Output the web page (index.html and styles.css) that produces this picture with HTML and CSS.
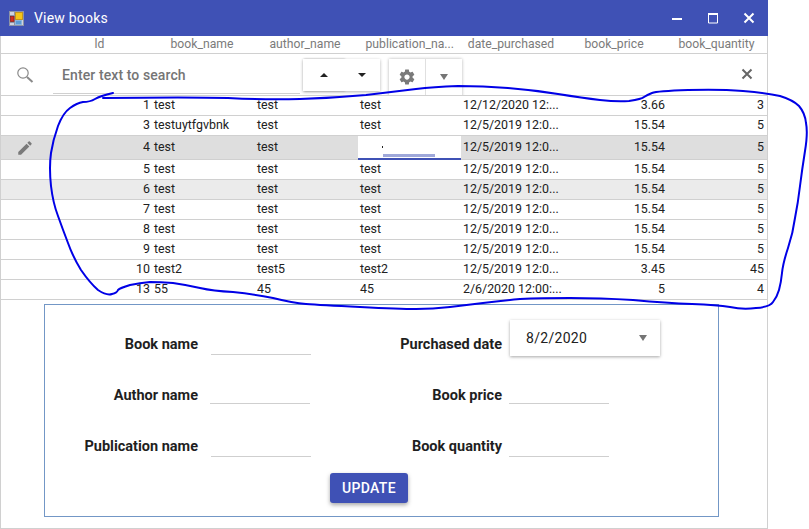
FILE: index.html
```html
<!DOCTYPE html>
<html lang="en">
<head>
<meta charset="utf-8">
<title>View books</title>
<link rel="stylesheet" href="styles.css">
</head>
<body>
<div class="window">
  <header class="titlebar">
    <svg class="app-icon" width="15" height="15" viewBox="0 0 15 15"><rect x="0.5" y="0.5" width="14" height="14" fill="#cfd3de" stroke="#8d93a6"/><path d="M0.500 4.500h5M5.500 0.500v14M0.500 11.500h5" stroke="#8d93a6" fill="none"/><rect x="6.500" y="1.500" width="7" height="7" fill="#f5c518" stroke="#c4961c"/><rect x="1.500" y="5.500" width="3.500" height="5" fill="#d42b1e" stroke="#8b1f17" stroke-width="0.800"/><rect x="6.500" y="9.500" width="6" height="4" fill="#5b9bd5" stroke="#8ab4de" stroke-width="0.800"/></svg>
    <span class="title">View books</span>
    <div class="win-controls">
      <svg width="12" height="12" viewBox="0 0 12 12"><rect x="1" y="6" width="10" height="2" fill="#fff"/></svg>
      <svg width="12" height="12" viewBox="0 0 12 12"><path d="M1.500 2v9h9V2z" fill="none" stroke="#fff"/><rect x="1" y="1" width="10" height="2" fill="#fff"/></svg>
      <svg width="12" height="12" viewBox="0 0 12 12"><path d="M1.500 1.500l9 9M10.500 1.500l-9 9" stroke="#fff" stroke-width="2" fill="none"/></svg>
    </div>
  </header>

  <div class="row head">
    <span></span>
    <span>ld</span><span>book_name</span><span>author_name</span><span class="clip">publication_na...</span><span>date_purchased</span><span>book_price</span><span class="last">book_quantity</span>
  </div>

  <div class="toolbar">
    <svg class="search-icon" width="18" height="18" viewBox="0 0 18 18"><circle cx="7" cy="7" r="5.200" fill="none" stroke="#8a8a8a" stroke-width="1.200"/><path d="M11 11l5.500 5" stroke="#8a8a8a" stroke-width="2" fill="none"/></svg>
    <div class="search">Enter text to search</div>
    <div class="btn-group sort">
      <button class="tool"><i class="caret up"></i></button>
      <button class="tool"><i class="caret down"></i></button>
    </div>
    <div class="btn-group gear">
      <button class="tool">
        <svg width="18" height="18" viewBox="0 0 24 24"><path fill="#7a7a7a" d="M19.430 12.980c.04-.32.07-.64.07-.98s-.03-.66-.07-.98l2.110-1.650c.19-.15.24-.42.12-.64l-2-3.460c-.12-.22-.39-.3-.61-.22l-2.490 1c-.52-.4-1.080-.73-1.690-.98l-.38-2.650C14.460 2.180 14.250 2 14 2h-4c-.25 0-.46.18-.49.420l-.38 2.650c-.61.25-1.170.59-1.690.98l-2.490-1c-.23-.09-.49 0-.61.22l-2 3.460c-.13.22-.07.49.12.64l2.110 1.650c-.04.32-.07.650-.07.980s.03.66.07.98l-2.110 1.650c-.19.15-.24.42-.12.64l2 3.460c.12.22.39.3.61.22l2.490-1c.52.4 1.080.73 1.690.98l.38 2.650c.03.24.24.42.49.42h4c.25 0 .46-.18.49-.42l.38-2.650c.61-.25 1.170-.59 1.690-.98l2.490 1c.23.09.49 0 .61-.22l2-3.460c.12-.22.07-.49-.12-.64l-2.110-1.650zM12 15.500c-1.930 0-3.500-1.570-3.500-3.500s1.570-3.500 3.500-3.500 3.500 1.570 3.500 3.500-1.570 3.500-3.500 3.500z"/></svg>
      </button>
      <button class="tool"><i class="caret down grey"></i></button>
    </div>
    <svg class="close-icon" width="12" height="12" viewBox="0 0 12 12"><path d="M1.500 1.500l9 9M10.500 1.500l-9 9" stroke="#666" stroke-width="2" fill="none"/></svg>
  </div>

  <div class="row"><span></span><span class="num">1</span><span>test</span><span>test</span><span>test</span><span>12/12/2020 12:...</span><span class="num">3.66</span><span class="num qty">3</span></div>
  <div class="row"><span></span><span class="num">3</span><span>testuytfgvbnk</span><span>test</span><span>test</span><span>12/5/2019 12:0...</span><span class="num">15.54</span><span class="num qty">5</span></div>
  <div class="row selected">
    <span class="pencil"><svg width="18" height="18" viewBox="0 0 24 24"><path fill="#7a7a7a" d="M3 17.250V21h3.750L17.810 9.940l-3.750-3.750L3 17.250zM20.710 7.040c.39-.39.39-1.020 0-1.410l-2.340-2.340c-.39-.39-1.020-.39-1.410 0l-1.830 1.830 3.750 3.750 1.830-1.830z"/></svg></span>
    <span class="num">4</span><span>test</span><span>test</span>
    <span class="editor"><i class="cursor"></i><i class="ink"></i></span>
    <span>12/5/2019 12:0...</span><span class="num">15.54</span><span class="num qty">5</span>
  </div>
  <div class="row"><span></span><span class="num">5</span><span>test</span><span>test</span><span>test</span><span>12/5/2019 12:0...</span><span class="num">15.54</span><span class="num qty">5</span></div>
  <div class="row alt"><span></span><span class="num">6</span><span>test</span><span>test</span><span>test</span><span>12/5/2019 12:0...</span><span class="num">15.54</span><span class="num qty">5</span></div>
  <div class="row"><span></span><span class="num">7</span><span>test</span><span>test</span><span>test</span><span>12/5/2019 12:0...</span><span class="num">15.54</span><span class="num qty">5</span></div>
  <div class="row"><span></span><span class="num">8</span><span>test</span><span>test</span><span>test</span><span>12/5/2019 12:0...</span><span class="num">15.54</span><span class="num qty">5</span></div>
  <div class="row"><span></span><span class="num">9</span><span>test</span><span>test</span><span>test</span><span>12/5/2019 12:0...</span><span class="num">15.54</span><span class="num qty">5</span></div>
  <div class="row"><span></span><span class="num">10</span><span>test2</span><span>test5</span><span>test2</span><span>12/5/2019 12:0...</span><span class="num">3.45</span><span class="num qty">45</span></div>
  <div class="row"><span></span><span class="num">13</span><span>55</span><span>45</span><span>45</span><span>2/6/2020 12:00:...</span><span class="num">5</span><span class="num qty">4</span></div>

  <form class="edit-form">
    <div class="fields">
      <label class="lbl top">Book name</label><div class="line top"></div>
      <label class="lbl top">Purchased date</label>
      <div class="date"><span>8/2/2020</span><i class="caret down grey"></i></div>
      <label class="lbl">Author name</label><div class="line mid shift"></div>
      <label class="lbl">Book price</label><div class="line mid right"></div>
      <label class="lbl">Publication name</label><div class="line"></div>
      <label class="lbl">Book quantity</label><div class="line right"></div>
    </div>
    <button class="update" type="button">UPDATE</button>
  </form>
</div>

<svg class="scribble" width="809" height="529" viewBox="0 0 809 529"><path d="M103 98Q190 97 228 98Q267 100 300 99Q333 98 366 95Q400 91 416 89Q433 87 458 86Q483 86 508 88Q533 90 558 94Q583 98 600 100Q617 102 629 101Q642 99 644 97Q647 95 652 93Q657 91 688 90Q720 89 743 91Q767 93 780 96Q793 100 799 106Q805 113 806 123Q808 133 805 151Q802 170 800 186Q798 203 795 218Q793 233 788 248Q783 263 782 273Q781 283 779 290Q777 297 773 302Q770 307 756 308Q743 310 730 307Q717 305 692 304Q667 303 633 300Q600 298 570 298Q540 298 520 299Q500 301 483 303Q467 305 450 307Q433 309 416 309Q400 309 360 307Q320 305 306 304Q293 303 273 298Q253 294 233 292Q213 291 200 288Q187 285 173 283Q160 282 150 282Q140 283 130 285Q120 288 118 290Q117 293 112 294Q107 296 98 290Q90 283 81 270Q73 257 68 243Q63 230 58 216Q53 203 51 186Q49 167 51 153Q53 140 58 126Q63 113 70 108Q77 103 83 102Q90 102 95 99Q100 96 113 93" fill="none" stroke="#0000e6" stroke-width="2" stroke-linecap="round" stroke-linejoin="round"/></svg>
</body>
</html>
```

FILE: styles.css
```css
* { box-sizing: border-box; }
html, body { margin: 0; padding: 0; background: #fff; }
body { position: relative; width: 809px; height: 529px; overflow: hidden; font-family: Roboto, sans-serif; color: #212121; }

.window { width: 768px; height: 529px; border: 1px solid #d0d0d0; border-top: 0; display: flex; flex-direction: column; }

.titlebar { height: 36px; margin: 0 -1px; background: #3f51b5; color: #fff; display: flex; align-items: center; padding-left: 9px; flex: none; }
.app-icon { margin-right: 10px; }
.title { font-size: 14px; letter-spacing: 0.2px; }
.win-controls { margin-left: auto; display: flex; gap: 24px; padding-right: 13px; }

.row { display: grid; grid-template-columns: 50px 102px 103px 103px 103px 103px 103px 97px; height: 20px; border-bottom: 1px solid #d0d0d0; font-size: 12.4px; line-height: 17px; flex: none; }
.row > span { padding-left: 1px; white-space: nowrap; }
.row > .num { text-align: right; padding: 0 3px 0 0; }
.row > .qty { padding-right: 1px; }

.head { height: 18px; line-height: 16px; color: #7b7b7b; font-size: 12.2px; }
.head > span { text-align: center; padding: 0 5px 0 0; }
.head > .clip { text-align: right; padding-right: 8px; }
.head > .last { padding: 0; }

.selected { height: 24px; line-height: 21px; background: #dedede; }
.alt { background: #ebebeb; }
.row > .pencil { display: flex; align-items: center; justify-content: center; padding: 1px 0 0; margin-left: -2px; }
.row > .editor { position: relative; background: #fff; margin: 0 1px -1px -1px; border-bottom: 2px solid #3f51b5; }
.cursor { position: absolute; left: 24px; top: 10px; width: 1px; height: 2px; background: #222; }
.ink { position: absolute; left: 25px; right: 26px; bottom: 1px; height: 3px; background: #9fa8da; }

.toolbar { height: 42px; border-bottom: 1px solid #d0d0d0; display: flex; align-items: flex-start; flex: none; overflow: hidden; }
.search-icon { margin: 12px 0 0 15px; flex: none; }
.search { width: 247px; height: 40px; margin: 0 3px 0 19px; padding: 12px 0 0 9px; border-bottom: 1px solid #d0d0d0; font-size: 14px; line-height: 18px; font-weight: 500; color: #757575; letter-spacing: 0.1px; flex: none; }
.btn-group { display: flex; margin-top: 5px; flex: none; }
.tool { border: 0; background: #fff; padding: 0; display: flex; align-items: center; justify-content: center; }
.sort { height: 32px; width: 77px; box-shadow: 0 1px 3px rgba(0,0,0,.3); }
.sort .tool { width: 36px; }
.sort .tool:first-child { width: 41px; box-shadow: 1px 0 2px rgba(0,0,0,.3); }
.gear { height: 40px; width: 73px; margin-left: 9px; box-shadow: 0 0 3px rgba(0,0,0,.3); }
.gear .tool { flex: 1; padding-bottom: 5px; }
.gear .tool:first-child { border-right: 1px solid #e0e0e0; }
.close-icon { margin: 14px 0 0 279px; flex: none; }

.caret { display: block; width: 0; height: 0; border-left: 4px solid transparent; border-right: 4px solid transparent; }
.caret.up { border-bottom: 4px solid #222; }
.caret.down { border-top: 4px solid #222; }
.caret.grey { border-top: 6px solid #757575; }

.edit-form { width: 675px; height: 213px; margin: 4px 0 0 43px; border: 1px solid #7397c6; display: flex; flex-direction: column; align-items: flex-start; padding-top: 15px; flex: none; }
.fields { display: grid; grid-template-columns: 153px 113px 191px 158px; grid-template-rows: 36px 50px 51px; }
.lbl { font-size: 14.5px; font-weight: 700; text-align: right; line-height: 18px; align-self: end; color: #1f1f1f; margin-bottom: 1px; white-space: nowrap; }
.lbl.top { margin-bottom: 2px; }
.line { height: 1px; width: 100px; background: #cfcfcf; align-self: end; margin-left: 13px; }
.line.top { margin-bottom: 1px; }
.line.mid { margin-bottom: 2px; }
.line.shift { margin-left: 12px; }
.line.right { margin-left: 7px; }
.date { width: 150px; height: 36px; margin-left: 8px; box-shadow: 0 1px 3px rgba(0,0,0,.35); display: flex; align-items: center; justify-content: space-between; padding: 0 13px 0 16px; font-size: 14px; letter-spacing: 0.3px; background: #fff; }
.update { width: 78px; height: 30px; margin: 16px 0 0 285px; border: 0; border-radius: 3px; background: #3f51b5; color: #fff; font: 500 14px Roboto, sans-serif; letter-spacing: 0.3px; box-shadow: 0 2px 4px rgba(0,0,0,.35); }

.scribble { position: absolute; left: 0; top: 0; pointer-events: none; }
```
